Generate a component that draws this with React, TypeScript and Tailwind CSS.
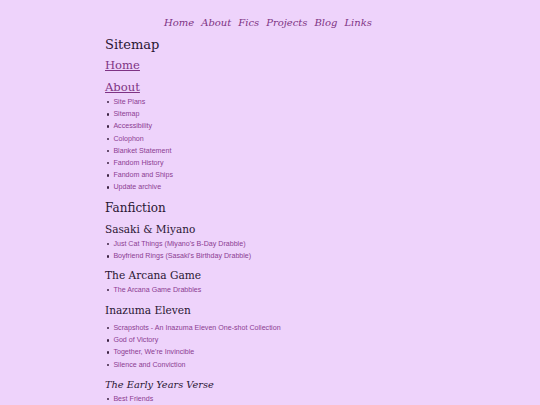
import React from 'react';

const serif = { fontFamily: '"DejaVu Serif", Georgia, serif' };
const sans = { fontFamily: '"Liberation Sans", Arial, sans-serif' };

const navLinks = ['Home', 'About', 'Fics', 'Projects', 'Blog', 'Links'];

const aboutPages = [
  'Site Plans',
  'Sitemap',
  'Accessibility',
  'Colophon',
  'Blanket Statement',
  'Fandom History',
  'Fandom and Ships',
  'Update archive',
];

interface LinkListProps {
  items: string[];
  className?: string;
}

const LinkList: React.FC<LinkListProps> = ({ items, className = '' }) => (
  <ul className={`text-[7.1px] leading-[12.2px] ${className}`} style={sans}>
    {items.map((item) => (
      <li key={item} className="flex items-center">
        <span className="ml-[2px] mr-[4px] h-[2.4px] w-[2.4px] rounded-full bg-[#3b2242]" />
        <a href="#" className="text-[#8c3d92]">
          {item}
        </a>
      </li>
    ))}
  </ul>
);

export default function App() {
  return (
    <div className="min-h-[405px] w-full bg-[#eed3fb] text-[#2a1633]">
      <nav className="flex justify-center gap-[7px] pr-[4px] pt-[15px] text-[10px] italic leading-[16px]" style={serif}>
        {navLinks.map((link) => (
          <a key={link} href="#" className="text-[#7e3384]">
            {link}
          </a>
        ))}
      </nav>

      <main className="mx-auto w-[330px]" style={serif}>
        <h1 className="mt-[4px] text-[13px] leading-[20px]">Sitemap</h1>
        <a href="#" className="block w-fit text-[11.6px] leading-[20px] text-[#7e3384] underline">
          Home
        </a>
        <a href="#" className="mt-[3px] block w-fit text-[11.6px] leading-[18px] text-[#7e3384] underline">
          About
        </a>
        <LinkList items={aboutPages} />

        <h2 className="mt-[4.4px] text-[12px] leading-[20px]">Fanfiction</h2>

        <h3 className="mt-[2px] text-[10.5px] leading-[18px]">Sasaki &amp; Miyano</h3>
        <LinkList items={["Just Cat Things (Miyano's B-Day Drabble)", "Boyfriend Rings (Sasaki's Birthday Drabble)"]} />

        <h3 className="mt-[3.6px] text-[10.6px] leading-[18px]">The Arcana Game</h3>
        <LinkList items={['The Arcana Game Drabbles']} />

        <h3 className="mt-[4.8px] text-[10.6px] leading-[18px]">Inazuma Eleven</h3>
        <LinkList
          className="mt-[3px]"
          items={[
            'Scrapshots - An Inazuma Eleven One-shot Collection',
            'God of Victory',
            "Together, We're Invincible",
            'Silence and Conviction',
          ]}
        />

        <h4 className="mt-[6px] text-[9.8px] italic leading-[16px]">The Early Years Verse</h4>
        <LinkList items={['Best Friends']} />
      </main>
    </div>
  );
}
